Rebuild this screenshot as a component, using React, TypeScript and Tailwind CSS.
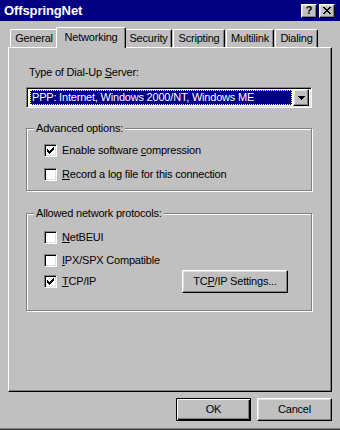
import React from "react";

const raised =
  "bg-[#c0c0c0] border border-t-white border-l-white border-r-black border-b-black shadow-[inset_-1px_-1px_0_#808080,inset_1px_1px_0_#dfdfdf]";

function CheckBox({ checked }: { checked?: boolean }) {
  return (
    <span className="w-[13px] h-[13px] shrink-0 bg-white border border-t-[#808080] border-l-[#808080] border-r-white border-b-white shadow-[inset_1px_1px_0_#000,inset_-1px_-1px_0_#dfdfdf] flex items-center justify-center">
      {checked && (
        <svg width="7" height="7" viewBox="0 0 7 7" shapeRendering="crispEdges">
          <path d="M0 2h1v3h-1zM1 3h1v3h-1zM2 4h1v3h-1zM3 3h1v3h-1zM4 2h1v3h-1zM5 1h1v3h-1zM6 0h1v3h-1z" fill="#000" />
        </svg>
      )}
    </span>
  );
}

function Tab({ label, w, active }: { label: string; w: string; active?: boolean }) {
  return (
    <div
      className={
        active
          ? `${w} h-[21px] -mb-px -mx-[2px] relative z-10 bg-[#c0c0c0] border-l border-t border-l-white border-t-white border-r border-r-black shadow-[inset_-1px_0_0_#808080] rounded-tl-[2px] rounded-tr-[2px] flex items-start justify-center pt-[3px]`
        : `${w} h-[18px] bg-[#c0c0c0] border-l border-t border-l-white border-t-white border-r border-r-black shadow-[inset_-1px_0_0_#808080] rounded-tl-[2px] rounded-tr-[2px] flex items-start justify-center pt-[2px]`
      }
    >
      {label}
    </div>
  );
}

export default function App() {
  return (
    <div className="w-[340px] h-[430px] bg-[#c0c0c0] font-['Liberation_Sans',Arial,sans-serif] text-[11px] leading-[13px] tracking-[-0.2px] text-black flex flex-col overflow-hidden">
      {/* title bar */}
      <div className="h-[21px] bg-[#000080] flex items-center justify-between pl-[4px] pr-[5px] shrink-0">
        <span className="text-white font-bold text-[13px] tracking-[-0.1px]">OffspringNet</span>
        <div className="flex gap-[2px]">
          <div className={`${raised} w-[16px] h-[14px] flex items-center justify-center font-bold text-[11px] leading-none`}>?</div>
          <div className={`${raised} w-[16px] h-[14px] flex items-center justify-center`}>
            <svg width="8" height="7" viewBox="0 0 8 7" shapeRendering="crispEdges">
              <path d="M0 0h2v1h-2zM6 0h2v1h-2zM1 1h2v1h-2zM5 1h2v1h-2zM2 2h4v1h-4zM3 3h2v1h-2zM2 4h4v1h-4zM1 5h2v1h-2zM5 5h2v1h-2zM0 6h2v1h-2zM6 6h2v1h-2z" fill="#000" />
            </svg>
          </div>
        </div>
      </div>

      <div className="px-2 pt-[6px] shrink-0">
        {/* tabs */}
        <div className="h-[20px] flex items-end pl-[2px]">
          <Tab label="General" w="w-[48px]" />
          <Tab label="Networking" w="w-[70px]" active />
          <div className="w-[1px]" />
          <Tab label="Security" w="w-[47px]" />
          <div className="w-[1px]" />
          <Tab label="Scripting" w="w-[52px]" />
          <div className="w-[1px]" />
          <Tab label="Multilink" w="w-[48px]" />
          <div className="w-[1px]" />
          <Tab label="Dialing" w="w-[43px]" />
        </div>

        {/* panel */}
        <div className="h-[345px] border border-t-white border-l-white border-r-black border-b-black shadow-[inset_-1px_-1px_0_#808080] pl-[17px] pr-[19px] pt-[18px] flex flex-col">
          <div className="ml-[3px]">
            Type of Dial-Up <span className="underline">S</span>erver:
          </div>

          {/* dropdown */}
          <div className="mt-[8px] h-[21px] bg-white border border-t-[#808080] border-l-[#808080] border-r-white border-b-white shadow-[inset_1px_1px_0_#000,inset_-1px_-1px_0_#dfdfdf] flex items-center p-[2px]">
            <div className="flex-1 h-[15px] ml-[1px] mr-[1px] bg-[#000080] border border-dotted border-[#ffff80] text-white flex items-center pl-[1px] whitespace-nowrap">
              PPP: Internet, Windows 2000/NT, Windows ME
            </div>
            <div className={`${raised} w-[16px] h-[17px] flex items-center justify-center`}>
              <svg width="7" height="4" viewBox="0 0 7 4" shapeRendering="crispEdges">
                <path d="M0 0h7v1h-7zM1 1h5v1h-5zM2 2h3v1h-3zM3 3h1v1h-1z" fill="#000" />
              </svg>
            </div>
          </div>

          {/* advanced options */}
          <fieldset className="mt-[14px] border border-[#808080] shadow-[1px_1px_0_#fff,inset_1px_1px_0_#fff]">
            <legend className="ml-[7px] px-[2px] bg-[#c0c0c0]">Advanced options:</legend>
            <div className="pl-[17px] pt-[9px] pb-[9px]">
              <div className="flex items-center gap-[5px]">
                <CheckBox checked />
                <span>
                  Enable software <span className="underline">c</span>ompression
                </span>
              </div>
              <div className="flex items-center gap-[5px] mt-[11px]">
                <CheckBox />
                <span>
                  <span className="underline">R</span>ecord a log file for this connection
                </span>
              </div>
            </div>
          </fieldset>

          {/* protocols */}
          <fieldset className="mt-[16px] border border-[#808080] shadow-[1px_1px_0_#fff,inset_1px_1px_0_#fff]">
            <legend className="ml-[7px] px-[2px] bg-[#c0c0c0]">Allowed network protocols:</legend>
            <div className="pl-[17px] pt-[11px] pb-[17px]">
              <div className="flex items-center gap-[5px]">
                <CheckBox />
                <span>
                  <span className="underline">N</span>etBEUI
                </span>
              </div>
              <div className="flex items-center gap-[5px] mt-[10px]">
                <CheckBox />
                <span>
                  <span className="underline">I</span>PX/SPX Compatible
                </span>
              </div>
              <div className="flex items-center mt-[3px]">
                <div className="w-[138px] flex items-center gap-[5px]">
                  <CheckBox checked />
                  <span>
                    <span className="underline">T</span>CP/IP
                  </span>
                </div>
                <div className={`${raised} w-[106px] h-[23px] flex items-center justify-center`}>
                  TC<span className="underline">P</span>/IP Settings...
                </div>
              </div>
            </div>
          </fieldset>
        </div>
      </div>

      {/* footer */}
      <div className="flex justify-end gap-[6px] pr-2 mt-[6px] shrink-0">
        <div className="w-[75px] h-[23px] border border-black shadow-[inset_1px_1px_0_#fff,inset_-1px_-1px_0_#000,inset_-2px_-2px_0_#808080] flex items-center justify-center">
          OK
        </div>
        <div className={`${raised} w-[75px] h-[23px] flex items-center justify-center`}>Cancel</div>
      </div>
      <div className="mt-[7px] h-[1px] bg-[#808080] shrink-0" />
      <div className="h-[1px] bg-[#404040] shrink-0" />
    </div>
  );
}
